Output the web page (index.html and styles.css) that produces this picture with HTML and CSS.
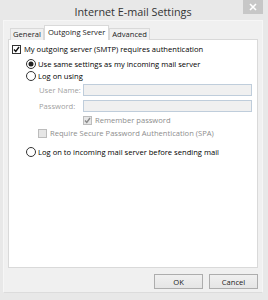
FILE: index.html
```html
<!DOCTYPE html>
<html>
<head>
<meta charset="utf-8">
<link rel="stylesheet" href="styles.css">
</head>
<body>
<div class="window">
  <div class="titlebar">
    <span class="title">Internet E-mail Settings</span>
    <span class="close"><svg width="8" height="8" viewBox="0 0 8 8"><path d="M1 1L7 7M7 1L1 7" stroke="#fff" stroke-width="1.6"/></svg></span>
  </div>
  <div class="client">
    <div class="tabs">
      <div class="tab">General</div>
      <div class="tab active">Outgoing Server</div>
      <div class="tab">Advanced</div>
    </div>
    <div class="panel">
      <div class="row r1">
        <svg class="box" width="9" height="9" viewBox="0 0 9 9"><rect x="0.5" y="0.5" width="8" height="8" fill="#fff" stroke="#333"/><path d="M2 4.5L3.8 6.5L7 2" fill="none" stroke="#111" stroke-width="1.4"/></svg>
        <span>My outgoing server (SMTP) requires authentication</span>
      </div>
      <div class="row r2 indent">
        <svg class="radio" width="10" height="10" viewBox="0 0 10 10"><circle cx="5" cy="5" r="4.5" fill="#fff" stroke="#333"/><circle cx="5" cy="5" r="2.5" fill="#222"/></svg>
        <span>Use same settings as my incoming mail server</span>
      </div>
      <div class="row r3 indent">
        <svg class="radio" width="10" height="10" viewBox="0 0 10 10"><circle cx="5" cy="5" r="4.5" fill="#fff" stroke="#333"/></svg>
        <span>Log on using</span>
      </div>
      <div class="field f1">
        <span class="lbl">User Name:</span>
        <span class="input"></span>
      </div>
      <div class="field f2">
        <span class="lbl">Password:</span>
        <span class="input"></span>
      </div>
      <div class="row r6 disabled">
        <svg class="box" width="9" height="9" viewBox="0 0 9 9"><rect x="0.5" y="0.5" width="8" height="8" fill="#e6e6e6" stroke="#bcbcbc"/><path d="M2 4.5L3.8 6.5L7 2" fill="none" stroke="#8a8a8a" stroke-width="1.4"/></svg>
        <span>Remember password</span>
      </div>
      <div class="row r7 disabled">
        <svg class="box" width="9" height="9" viewBox="0 0 9 9"><rect x="0.5" y="0.5" width="8" height="8" fill="#e6e6e6" stroke="#bcbcbc"/></svg>
        <span>Require Secure Password Authentication (SPA)</span>
      </div>
      <div class="row r8 indent">
        <svg class="radio" width="10" height="10" viewBox="0 0 10 10"><circle cx="5" cy="5" r="4.5" fill="#fff" stroke="#333"/></svg>
        <span>Log on to incoming mail server before sending mail</span>
      </div>
    </div>
    <div class="buttons">
      <button class="btn">OK</button>
      <button class="btn">Cancel</button>
    </div>
  </div>
</div>
</body>
</html>
```
FILE: styles.css
```css
html, body {
  margin: 0;
  padding: 0;
}
body {
  width: 268px;
  height: 300px;
  background: #e8e8e8;
  font-family: "Open Sans", "Noto Sans", sans-serif;
  font-size: 7.6px;
  color: #000;
  overflow: hidden;
}
.window {
  display: flex;
  flex-direction: column;
  height: 300px;
}
.titlebar {
  position: relative;
  height: 20px;
  display: flex;
  align-items: center;
  justify-content: center;
}
.title {
  font-size: 10.8px;
  color: #333;
  margin-top: 2px;
  margin-left: -2px;
}
.close {
  position: absolute;
  right: 5px;
  top: 0;
  width: 20px;
  height: 14px;
  background: #c7c7c7;
  display: flex;
  align-items: center;
  justify-content: center;
}
.client {
  margin: 0 5px 0 3px;
  height: 273px;
  background: #f0f0f0;
  border: 1px solid #f6f6f6;
  border-bottom: 1px solid #dcdcdc;
  padding: 4px 4px 0 4px;
  box-sizing: border-box;
  display: flex;
  flex-direction: column;
}
.tabs {
  display: flex;
  align-items: flex-end;
  height: 15px;
  padding-left: 2px;
  position: relative;
  z-index: 1;
  margin-bottom: -1px;
}
.tab {
  height: 12px;
  box-sizing: border-box;
  border: 1px solid #d9d9d9;
  border-bottom: none;
  background: #f0f0f0;
  padding: 0 2px;
  line-height: 11px;
  color: #222;
  white-space: nowrap;
}
.tab.active {
  height: 15px;
  background: #fff;
  border-color: #d9d9d9;
  padding: 0 3px;
  line-height: 12px;
}
.panel {
  height: 229px;
  background: #fff;
  border: 1px solid #d9d9d9;
  box-sizing: border-box;
  padding: 4px 0 0 3px;
}
.row {
  display: flex;
  align-items: center;
  height: 10px;
  gap: 3px;
}
.row span {
  white-space: nowrap;
}
.indent {
  padding-left: 14px;
  gap: 2px;
}
.r2 { margin-top: 5px; }
.r3 { margin-top: 2px; }
.field {
  display: flex;
  align-items: center;
  height: 12px;
  padding-left: 27px;
}
.f1 { margin-top: 3px; }
.f2 { margin-top: 4px; }
.lbl {
  width: 44px;
  color: #a0a0a0;
  white-space: nowrap;
}
.input {
  width: 169px;
  height: 12px;
  box-sizing: border-box;
  border: 1px solid #bfcddb;
  background: #f0f0f0;
}
.r6 { margin-top: 3px; padding-left: 71px; }
.r7 { margin-top: 3px; padding-left: 26px; }
.r8 { margin-top: 9px; }
.disabled { color: #8d8d8d; }
.box, .radio { flex: none; }
.buttons {
  display: flex;
  justify-content: flex-end;
  gap: 6px;
  margin-top: 6px;
}
.btn {
  width: 49px;
  height: 15px;
  box-sizing: border-box;
  border: 1px solid #adadad;
  background: linear-gradient(#f0f0f0, #e5e5e5);
  font-family: inherit;
  font-size: 7.6px;
  color: #1a1a1a;
  padding: 0;
}
```
